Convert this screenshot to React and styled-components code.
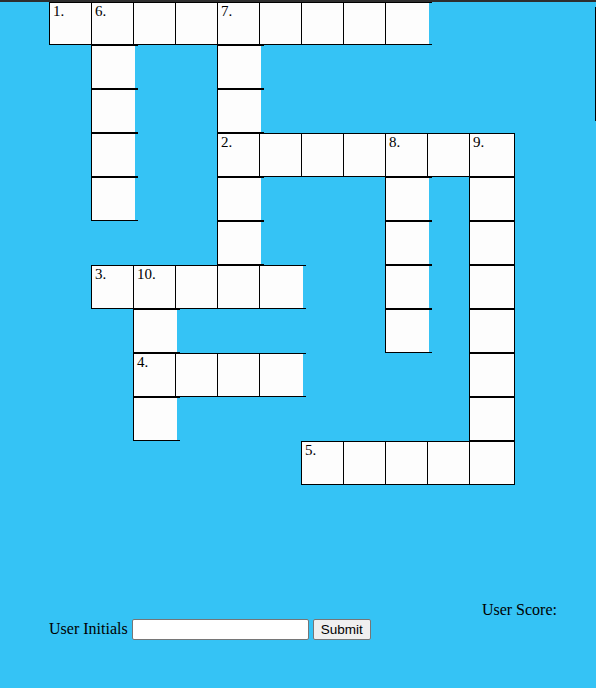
import React from "react";
import styled, { createGlobalStyle } from "styled-components";

const GlobalStyle = createGlobalStyle`
  html, body {
    margin: 0;
    padding: 0;
    background: #35c3f5;
    font-family: "Liberation Serif", "Times New Roman", serif;
    font-size: 16px;
    color: #000;
  }
`;

const TopBar = styled.div`
  height: 2px;
  background: #2e2e2e;
`;

const Board = styled.div`
  display: flex;
  align-items: flex-start;
`;

const Grid = styled.div`
  display: grid;
  grid-template-columns: repeat(11, 42px);
  grid-template-rows: 43px repeat(10, 44px);
  margin-left: 49px;
`;

const SideRule = styled.div`
  width: 1px;
  height: 114px;
  margin: 5px 0 0 auto;
  background: #000;
`;

// every square draws its left, top and bottom edge; the next square covers the overhang
const Cell = styled.div`
  grid-row: ${(p) => p.$row + 1};
  grid-column: ${(p) => p.$col + 1};
  justify-self: start;
  box-sizing: border-box;
  width: ${(p) => (p.$edge ? "46px" : "47px")};
  border-top: 1px solid #000;
  border-bottom: 1px solid #000;
  border-left: 1px solid #000;
  border-right: ${(p) => (p.$edge ? "1px solid #000" : "none")};
  background: ${(p) =>
    p.$edge
      ? "#fdfdfd"
      : "linear-gradient(to right, #fdfdfd 43px, transparent 43px) no-repeat"};
  padding: 0 0 0 3px;
  font-size: 15px;
  line-height: 17px;
`;

const across = [
  { n: 1, r: 0, c: 0, len: 9 },
  { n: 2, r: 3, c: 4, len: 7 },
  { n: 3, r: 6, c: 1, len: 5 },
  { n: 4, r: 8, c: 2, len: 4 },
  { n: 5, r: 10, c: 6, len: 5 },
];

const down = [
  { n: 6, r: 0, c: 1, len: 5 },
  { n: 7, r: 0, c: 4, len: 6 },
  { n: 8, r: 3, c: 8, len: 5 },
  { n: 9, r: 3, c: 10, len: 8 },
  { n: 10, r: 6, c: 2, len: 4 },
];

function buildCells() {
  const map = {};
  across.forEach((w) => {
    for (let i = 0; i < w.len; i++) {
      const key = `${w.r}-${w.c + i}`;
      map[key] = map[key] || { r: w.r, c: w.c + i, label: "" };
      if (i === 0) map[key].label = w.n + ".";
    }
  });
  down.forEach((w) => {
    for (let i = 0; i < w.len; i++) {
      const key = `${w.r + i}-${w.c}`;
      map[key] = map[key] || { r: w.r + i, c: w.c, label: "" };
      if (i === 0) map[key].label = w.n + ".";
    }
  });
  return Object.values(map).sort((a, b) => a.r - b.r || a.c - b.c);
}

const Footer = styled.div`
  margin-top: 117px;
`;

const ScoreRow = styled.div`
  text-align: right;
  padding-right: 39px;
  line-height: 16px;
`;

const InitialsRow = styled.div`
  display: flex;
  align-items: center;
  gap: 4px;
  padding-left: 49px;
  height: 22px;
`;

const TextInput = styled.input`
  box-sizing: border-box;
  width: 177px;
  height: 21px;
  border: 1px solid #767676;
  border-radius: 2px;
  background: #fff;
  padding: 1px 2px;
`;

const Button = styled.button`
  box-sizing: border-box;
  height: 21px;
  padding: 1px 7px;
  border: 1px solid #767676;
  border-radius: 2px;
  background: #efefef;
  font-family: "Liberation Sans", Arial, sans-serif;
  font-size: 13.5px;
  color: #000;
`;

export default function App() {
  const cells = buildCells();

  return (
    <>
      <GlobalStyle />
      <TopBar />
      <Board>
        <Grid>
          {cells.map((cell) => (
            <Cell
              key={`${cell.r}-${cell.c}`}
              $row={cell.r}
              $col={cell.c}
              $edge={cell.c === 10}
            >
              {cell.label}
            </Cell>
          ))}
        </Grid>
        <SideRule />
      </Board>
      <Footer>
        <ScoreRow>User Score:</ScoreRow>
        <InitialsRow>
          User Initials
          <TextInput type="text" />
          <Button>Submit</Button>
        </InitialsRow>
      </Footer>
    </>
  );
}
